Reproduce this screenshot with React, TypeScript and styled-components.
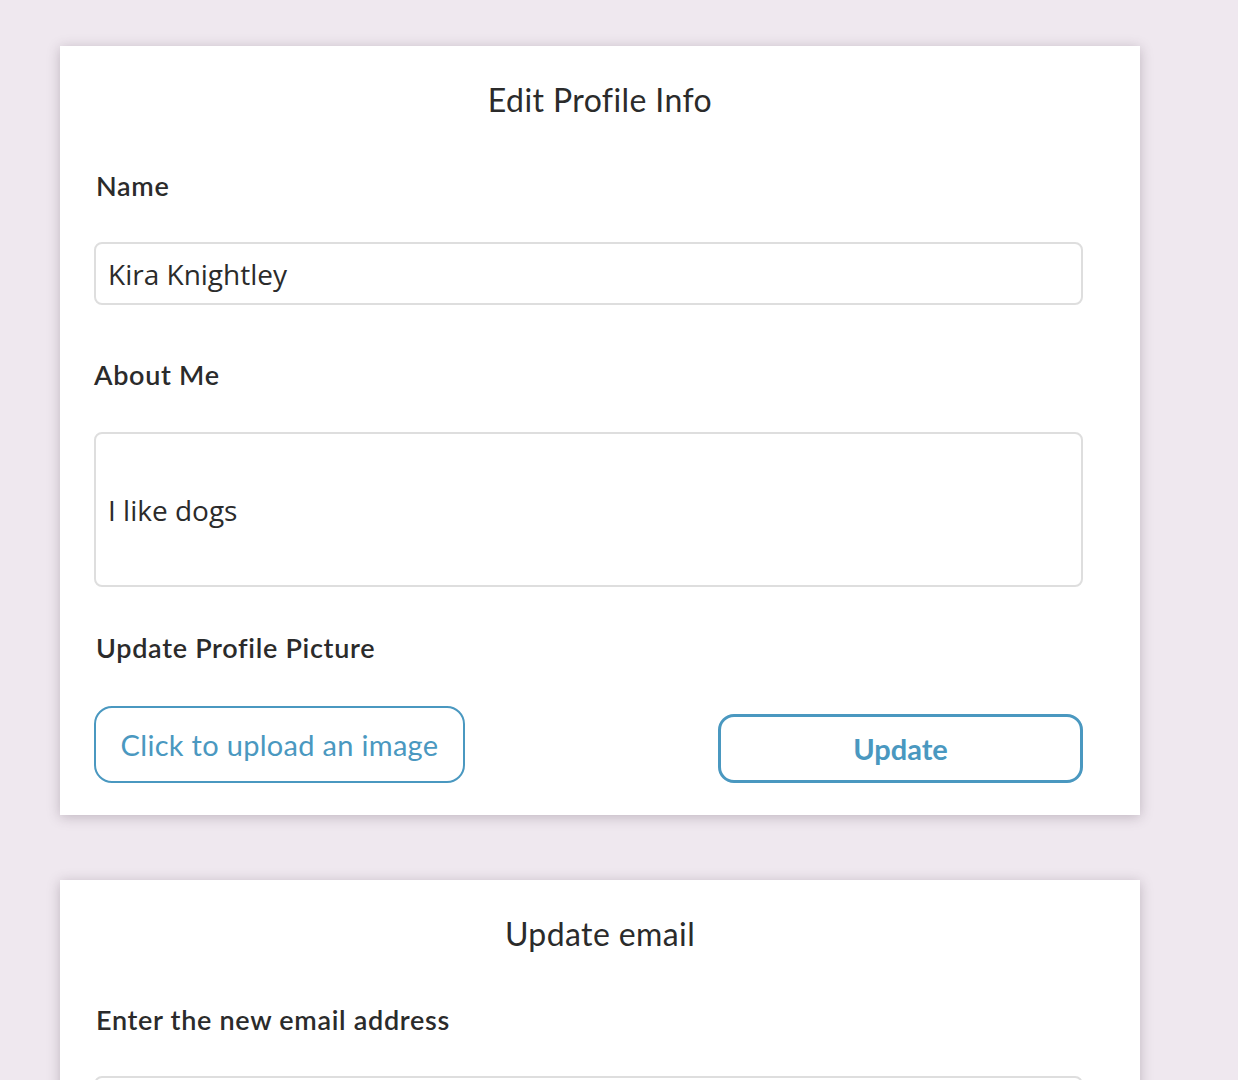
import React from "react";
import styled, { createGlobalStyle } from "styled-components";

const GlobalStyle = createGlobalStyle`
  html, body {
    margin: 0;
    padding: 0;
    background: #efe8ef;
  }
  body {
    font-family: "Lato", "Open Sans", sans-serif;
    color: #2b2b2b;
  }
`;

const Page = styled.div`
  padding: 46px 0 80px 60px;
  display: flex;
  flex-direction: column;
  gap: 65px;
`;

const Card = styled.section`
  width: 1080px;
  box-sizing: border-box;
  background: #fff;
  padding: 34px 57px 32px 34px;
  box-shadow: 0 2px 12px rgba(70, 50, 70, 0.28);
`;

const Title = styled.h2`
  margin: 0;
  height: 40px;
  line-height: 40px;
  text-align: center;
  font-size: 32px;
  font-weight: 400;
  letter-spacing: 0.4px;
  padding-left: 23px;
`;

const Label = styled.label<{ $top: number; $indent?: number }>`
  display: block;
  margin-top: ${(p) => p.$top}px;
  margin-left: ${(p) => p.$indent ?? 2}px;
  height: 30px;
  line-height: 30px;
  font-size: 27px;
  font-weight: 600;
  letter-spacing: 0.7px;
  color: #2b2b2b;
`;

const TextInput = styled.input`
  display: block;
  box-sizing: border-box;
  width: 989px;
  height: 63px;
  margin-top: 41px;
  padding: 0 12px;
  border: 2px solid #dedede;
  border-radius: 8px;
  font-family: "Open Sans", sans-serif;
  font-size: 28px;
  color: #2b2b2b;
  outline: none;
  background: #fff;
`;

const AboutBox = styled.div`
  box-sizing: border-box;
  width: 989px;
  height: 155px;
  margin-top: 42px;
  padding: 0 12px;
  border: 2px solid #dedede;
  border-radius: 8px;
  display: flex;
  align-items: center;
  font-family: "Open Sans", sans-serif;
  font-size: 28px;
  color: #2b2b2b;
`;

const Actions = styled.div`
  display: flex;
  justify-content: space-between;
  align-items: flex-end;
  width: 989px;
  margin-top: 43px;
`;

const UploadButton = styled.button`
  box-sizing: border-box;
  width: 371px;
  height: 77px;
  padding: 0;
  border: 2px solid #4a98c0;
  border-radius: 18px;
  background: #fff;
  color: #4a98c0;
  font-family: "Lato", sans-serif;
  font-size: 29px;
  font-weight: 400;
  letter-spacing: 0.3px;
  cursor: pointer;
`;

const SubmitButton = styled.button`
  box-sizing: border-box;
  width: 365px;
  height: 69px;
  padding: 0;
  border: 3px solid #4a98c0;
  border-radius: 16px;
  background: #fff;
  color: #4a98c0;
  font-family: "Lato", sans-serif;
  font-size: 29px;
  font-weight: 700;
  cursor: pointer;
`;

export default function App() {
  return (
    <>
      <GlobalStyle />
      <Page>
        <Card>
          <Title>Edit Profile Info</Title>
          <Label $top={51}>Name</Label>
          <TextInput defaultValue="Kira Knightley" />
          <Label $top={55} $indent={0}>
            About Me
          </Label>
          <AboutBox>I like dogs</AboutBox>
          <Label $top={46}>Update Profile Picture</Label>
          <Actions>
            <UploadButton>Click to upload an image</UploadButton>
            <SubmitButton>Update</SubmitButton>
          </Actions>
        </Card>
        <Card>
          <Title>Update email</Title>
          <Label $top={51}>Enter the new email address</Label>
          <TextInput defaultValue="" />
        </Card>
      </Page>
    </>
  );
}
